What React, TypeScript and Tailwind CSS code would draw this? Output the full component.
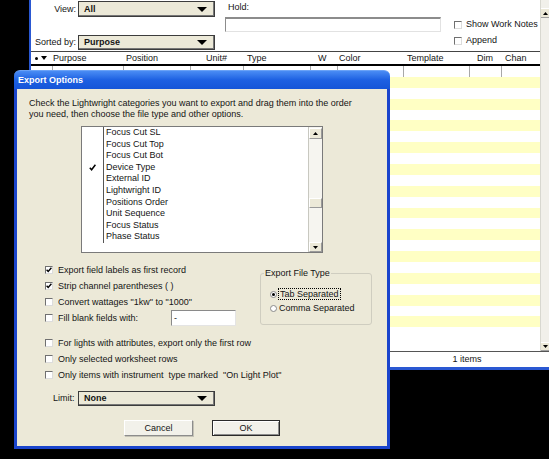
import React from 'react'

const cols = [
  { w: 'w-[21px]', pl: 'pl-[4px]', label: '' },
  { w: 'w-[71px]', pl: 'pl-[1px]', label: 'Purpose' },
  { w: 'w-[67px]', pl: 'pl-[3px]', label: 'Position' },
  { w: 'w-[53px]', pl: 'pl-[16px]', label: 'Unit#' },
  { w: 'w-[67px]', pl: 'pl-[4px]', label: 'Type' },
  { w: 'w-[27px]', pl: 'pl-[8px]', label: 'W' },
  { w: 'w-[66px]', pl: 'pl-[2px]', label: 'Color' },
  { w: 'w-[66px]', pl: 'pl-[4px]', label: 'Template' },
  { w: 'w-[32px]', pl: 'pl-[8px]', label: 'Dim' },
  { w: 'flex-1', pl: 'pl-[4px]', label: 'Chan' },
]

const categories = [
  'Focus Cut SL',
  'Focus Cut Top',
  'Focus Cut Bot',
  'Device Type',
  'External ID',
  'Lightwright ID',
  'Positions Order',
  'Unit Sequence',
  'Focus Status',
  'Phase Status',
]

function Arrow({ up }: { up?: boolean }) {
  return (
    <svg width="5" height="3" viewBox="0 0 5 3">
      <path d={up ? 'M0 3h5L2.5 0z' : 'M0 0h5L2.5 3z'} fill="#000" />
    </svg>
  )
}

function Drop({ label, className }: { label: string; className: string }) {
  return (
    <div className={`flex items-center bg-[#ece9d8] border border-[#3c3c3c] shadow-[inset_-1px_-1px_0_#777] ${className}`}>
      <span className="flex-1 pl-[5px] font-bold">{label}</span>
      <svg width="10" height="5" viewBox="0 0 10 5" className="mr-[7px]">
        <path d="M0 0h10L5 5z" fill="#000" />
      </svg>
    </div>
  )
}

function Box({ checked }: { checked?: boolean }) {
  return (
    <span className="flex items-center justify-center w-[8px] h-[8px] shrink-0 bg-white border-t border-l border-[#707070] border-r border-b border-r-[#dcdcdc] border-b-[#dcdcdc]">
      {checked && (
        <svg width="6" height="6" viewBox="0 0 6 6">
          <path d="M0.6 2.8l1.6 1.7L5.4 0.8" fill="none" stroke="#000" strokeWidth="1.4" />
        </svg>
      )}
    </span>
  )
}

function CheckRow({ label, checked, children }: { label: string; checked?: boolean; children?: React.ReactNode }) {
  return (
    <div className="flex items-center h-[16px] gap-[5px]">
      <Box checked={checked} />
      {children ?? <span className="whitespace-pre">{label}</span>}
    </div>
  )
}

function Radio({ on }: { on?: boolean }) {
  return (
    <span className="flex items-center justify-center w-[7px] h-[7px] shrink-0 rounded-full bg-white border border-[#8a8a8a]">
      {on && <span className="w-[3px] h-[3px] rounded-full bg-black" />}
    </span>
  )
}

function BackWindow() {
  return (
    <div className="absolute left-[29px] top-0 w-[520px] h-[370px] bg-white border-l-2 border-b-[3px] border-[#2a58d2] flex flex-col">
      <div className="flex h-[351px]">
        <div className="flex-1 flex flex-col min-w-0">
          {/* filters */}
          <div className="flex h-[51px]">
            <div className="w-[184px] flex flex-col items-end pt-[1px]">
              <div className="flex items-center gap-[2px] h-[16px]">
                <span>View:</span>
                <Drop label="All" className="w-[137px] h-[16px]" />
              </div>
              <div className="flex items-center gap-[2px] h-[15px] mt-[18px]">
                <span>Sorted by:</span>
                <Drop label="Purpose" className="w-[137px] h-[15px]" />
              </div>
            </div>
            <div className="ml-[10px] w-[216px] flex flex-col">
              <span className="pl-[3px] pt-[2px]">Hold:</span>
              <div className="mt-[4px] h-[15px] bg-white border-t-2 border-l border-[#8c8c8c] border-r border-b border-r-[#e2e2e2] border-b-[#e2e2e2]" />
            </div>
            <div className="ml-[13px] pt-[19px] flex flex-col gap-[5px]">
              <div className="flex items-center h-[11px] gap-[4px]">
                <Box />
                <span>Show Work Notes</span>
              </div>
              <div className="flex items-center h-[11px] gap-[4px]">
                <Box />
                <span>Append</span>
              </div>
            </div>
          </div>

          {/* column header */}
          <div className="flex h-[15px] border-t border-[#444] border-b-2 border-b-black">
            {cols.map((c, i) => (
              <div key={i} className={`${c.w} ${c.pl} flex items-center shrink-0 leading-[12px]`}>
                {i === 0 ? (
                  <span className="flex items-center gap-[3px]">
                    <span className="w-[3px] h-[3px] rounded-full bg-black" />
                    <svg width="6" height="4" viewBox="0 0 6 4">
                      <path d="M0 0h6L3 4z" fill="#000" />
                    </svg>
                  </span>
                ) : (
                  c.label
                )}
              </div>
            ))}
          </div>

          {/* rows */}
          <div className="flex-1 flex flex-col overflow-hidden">
            {Array.from({ length: 25 }).map((_, r) => (
              <div key={r} className={`flex h-[10.9px] shrink-0 ${r % 2 === 1 ? 'bg-[#ffffc4]' : 'bg-white'}`}>
                {r === 0 &&
                  cols.map((c, i) => (
                    <div key={i} className={`${c.w} shrink-0 ${i > 0 ? 'border-l border-[#a8a8a8]' : ''}`} />
                  ))}
              </div>
            ))}
          </div>
        </div>

        {/* scrollbar */}
        <div className="w-[9px] flex flex-col bg-[#f1f0ea] border-l border-[#d8d8d0]">
          <div className="mt-[8px] h-[10px] flex items-center justify-center bg-[#ece9d8] border-t border-white border-b border-b-[#a0a0a0]">
            <Arrow up />
          </div>
          <div className="flex-1" />
          <div className="h-[9px] flex items-center justify-center bg-[#ece9d8] border-t border-white border-b border-b-[#a0a0a0]">
            <Arrow />
          </div>
        </div>
      </div>
      <div className="flex-1 flex border-t border-[#555]">
        <div className="ml-auto mr-[7px] w-[150px] flex items-center justify-center">1 items</div>
      </div>
    </div>
  )
}

function ExportDialog() {
  return (
    <div className="absolute left-[14px] top-[70px] w-[376px] flex flex-col">
      <div className="h-[19px] rounded-t-[6px] bg-linear-to-b from-[#4a8cf4] via-[#1d60e2] to-[#1555d8] flex items-center pl-[4px] border-t border-[#6aa2f7]">
        <span className="text-white font-bold">Export Options</span>
      </div>
      <div className="h-[360px] bg-[#ece9d8] border-x-[3px] border-b-[3px] border-[#1a44cc] flex flex-col">
        <p className="pt-[9px] pl-[12px]">
          Check the Lightwright categories you want to export and drag them into the order
          <br />
          you need, then choose the file type and other options.
        </p>

        {/* categories list */}
        <div className="mt-[6px] ml-[64px] w-[242px] h-[127px] bg-white border border-[#7a7a7a] flex">
          <div className="flex-1 flex flex-col">
            {categories.map((c, i) => (
              <div key={c} className="flex h-[11.6px] leading-[11.6px]">
                <div className="w-[21px] flex items-center justify-center">
                  {i === 3 && (
                    <svg width="7" height="7" viewBox="0 0 7 7">
                      <path d="M0.8 3.8l1.8 2L6.4 0.8" fill="none" stroke="#000" strokeWidth="1.5" />
                    </svg>
                  )}
                </div>
                <div className="flex-1 border-l border-[#555] pl-[2px]">{c}</div>
              </div>
            ))}
          </div>
          <div className="w-[14px] flex flex-col bg-[#f6f5f0] border-l border-[#c8c8c0]">
            <div className="mt-[1px] h-[11px] flex items-center justify-center bg-[#ece9d8] border-t border-l border-white border-r border-b border-r-[#9a9a9a] border-b-[#9a9a9a]">
              <Arrow up />
            </div>
            <div className="h-[59px]" />
            <div className="h-[10px] bg-[#ece9d8] border-t border-l border-white border-r border-b border-r-[#9a9a9a] border-b-[#9a9a9a]" />
            <div className="flex-1" />
            <div className="h-[10px] flex items-center justify-center bg-[#ece9d8] border-t border-l border-white border-r border-b border-r-[#9a9a9a] border-b-[#9a9a9a]">
              <Arrow />
            </div>
          </div>
        </div>

        {/* options + file type */}
        <div className="flex mt-[9px]">
          <div className="w-[243px] pl-[28px] flex flex-col">
            <CheckRow label="Export field labels as first record" checked />
            <CheckRow label="Strip channel parentheses ( )" checked />
            <CheckRow label={'Convert wattages "1kw" to "1000"'} />
            <CheckRow label="Fill blank fields with:">
              <span className="w-[108px]">Fill blank fields with:</span>
              <div className="w-[65px] h-[16px] bg-white border-t border-l border-[#8a8a8a] border-r border-b border-r-[#e4e4e4] border-b-[#e4e4e4] flex items-center pl-[2px]">
                -
              </div>
            </CheckRow>
          </div>
          <fieldset className="mt-[6px] w-[112px] h-[57px] border border-[#cfcdc0] rounded-[3px]">
            <legend className="ml-[3px] px-[1px]">Export File Type</legend>
            <div className="pl-[9px] pt-[8px] flex flex-col">
              <div className="flex items-center h-[14px] gap-[1px]">
                <Radio on />
                <span className="border border-dotted border-black px-[1px] leading-[10px]">Tab Separated</span>
              </div>
              <div className="flex items-center h-[14px] gap-[2px]">
                <Radio />
                <span>Comma Separated</span>
              </div>
            </div>
          </fieldset>
        </div>

        <div className="mt-[9px] pl-[28px] flex flex-col">
          <CheckRow label="For lights with attributes, export only the first row" />
          <CheckRow label="Only selected worksheet rows" />
          <CheckRow label={'Only items with instrument  type marked  "On Light Plot"'} />
        </div>

        <div className="mt-[8px] pl-[36px] flex items-center h-[15px]">
          <span className="w-[25px]">Limit:</span>
          <Drop label="None" className="w-[137px] h-[15px]" />
        </div>

        <div className="mt-[14px] flex justify-center gap-[19px]">
          <button className="w-[69px] h-[16px] bg-[#f2f1ea] border-t border-l border-white border-r border-b border-r-[#8c8c8c] border-b-[#8c8c8c] shadow-[1px_1px_0_#c4c2b6]">
            Cancel
          </button>
          <button className="w-[68px] h-[16px] bg-[#f2f1ea] border border-[#2a2a2a] shadow-[inset_1px_1px_0_#fff,inset_-1px_-1px_0_#8c8c8c]">
            OK
          </button>
        </div>
      </div>
    </div>
  )
}

export default function App() {
  return (
    <div className="relative w-[549px] h-[459px] overflow-hidden bg-black font-['Liberation_Sans',Arial,sans-serif] text-[9px] leading-[11px] text-[#141414]">
      <BackWindow />
      <ExportDialog />
    </div>
  )
}
